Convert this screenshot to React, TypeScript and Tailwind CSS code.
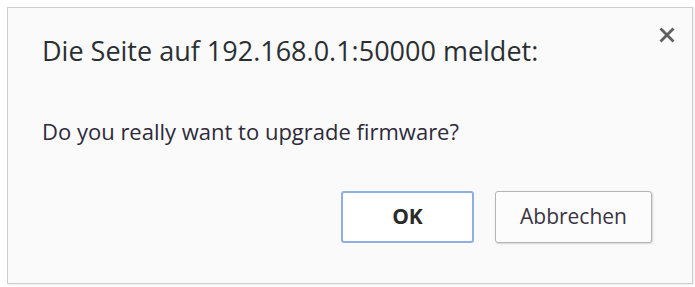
const App = () => {
  return (
    <div className="w-[695px] h-[287px] bg-white pt-[7px] pl-[7px] font-['Open_Sans',sans-serif]">
      <div className="relative w-[686px] h-[277px] border border-[#cdcdcd] bg-[#fafafa] shadow-[1px_1px_2px_rgba(0,0,0,0.08)]">
        <button className="absolute top-[18px] right-[16px] w-[18px] h-[18px] flex items-center justify-center">
          <svg width="18" height="18" viewBox="0 0 18 18">
            <path d="M3.5 3.5 L14.5 14.5 M14.5 3.5 L3.5 14.5" stroke="#5f5f5f" strokeWidth="2.8" strokeLinecap="square" />
          </svg>
        </button>

        <div className="pl-[34px] pt-[26px]">
          <h1 className="text-[27px] leading-[34px] text-[#2b2f33]">
            Die Seite auf 192.168.0.1:50000 meldet:
          </h1>
          <p className="mt-[49px] text-[22px] leading-[28px] font-medium text-[#2e2a3a]">
            Do you really want to upgrade firmware?
          </p>
        </div>

        <div className="flex justify-end gap-[21px] pr-[40px] mt-[46px]">
          <button className="w-[133px] h-[52px] rounded-[3px] border-2 border-[#8eaee6] bg-white text-[21px] font-bold text-[#2a2a2a]">
            OK
          </button>
          <button className="w-[157px] h-[52px] rounded-[3px] border border-[#b4b4b4] bg-[#fcfcfc] shadow-[1px_1px_2px_rgba(0,0,0,0.15)] text-[21px] font-medium text-[#3a3540]">
            Abbrechen
          </button>
        </div>
      </div>
    </div>
  );
};

export default App;
